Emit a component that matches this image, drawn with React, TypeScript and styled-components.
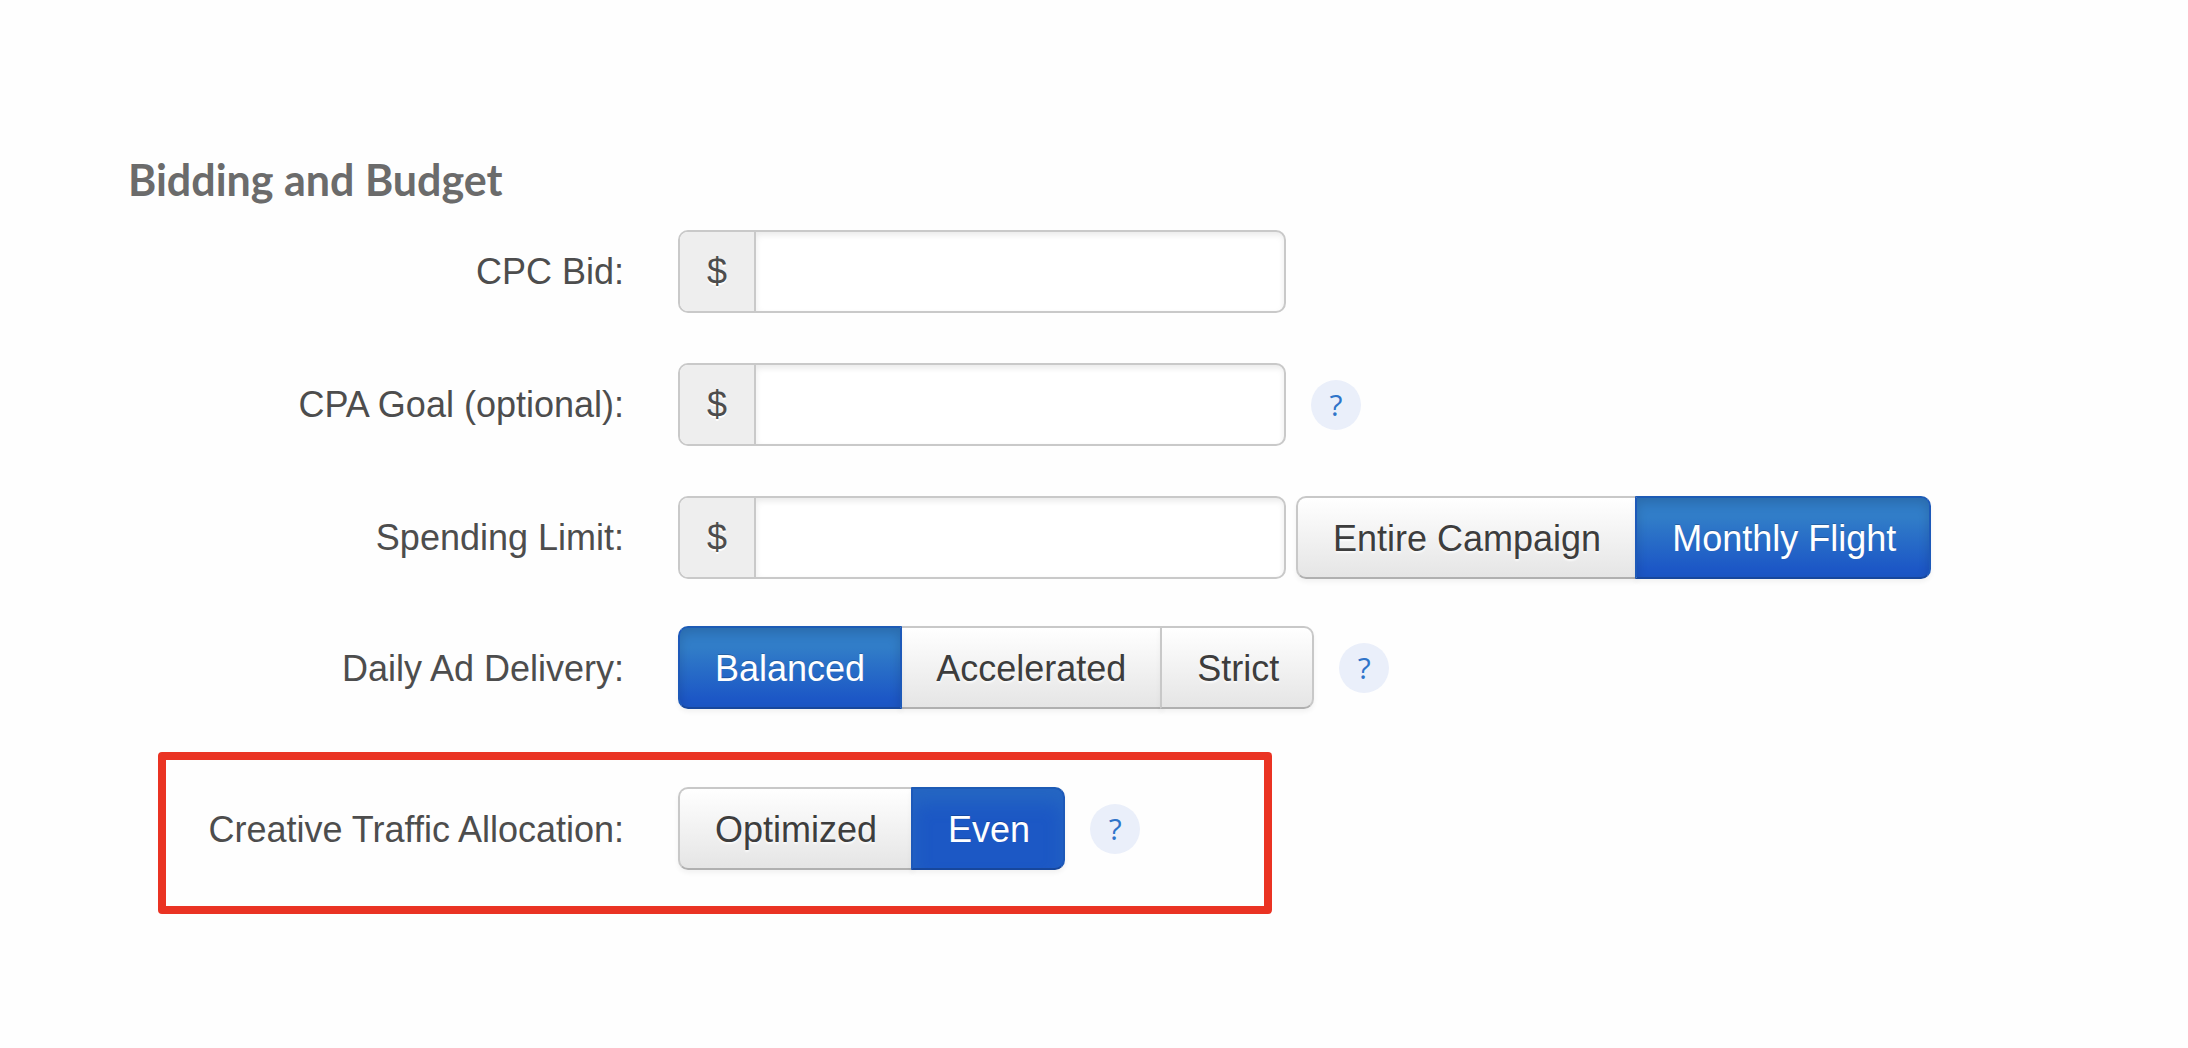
import React, { useState } from "react";
import styled, { createGlobalStyle, css } from "styled-components";

const GlobalStyle = createGlobalStyle`
  *, *::before, *::after { box-sizing: border-box; }
  body {
    margin: 0;
    background: #fefefe;
    color: #4d4d4d;
    font-family: "Liberation Sans", Arial, sans-serif;
    font-size: 36px;
    line-height: 42px;
  }
`;

const Page = styled.form`
  padding: 152px 128px 128px;
`;

const Heading = styled.h2`
  margin: 0 0 22px;
  color: #6b6b6b;
  font-family: Lato, sans-serif;
  font-size: 43px;
  font-weight: 700;
  line-height: 56px;
`;

const FieldList = styled.div`
  display: grid;
  gap: 50px;
  margin-bottom: 47px;
`;

const Row = styled.div<{ $highlighted?: boolean }>`
  display: flex;
  align-items: center;
  padding-left: 38px;

  ${({ $highlighted }) =>
    $highlighted &&
    css`
      max-width: 1114px;
      margin: 43px 0 0 30px;
      padding: 27px 0 36px;
      border: 8px solid #ea3323;
      border-radius: 4px;
    `}
`;

const labelStyle = css`
  flex: none;
  width: 458px;
  margin-right: 54px;
  text-align: right;
  white-space: nowrap;
`;

const FieldLabel = styled.label`
  ${labelStyle}
`;

const GroupLabel = styled.span`
  ${labelStyle}
  padding-top: 2px;
`;

const MoneyBox = styled.div`
  display: flex;
  flex: none;
  width: 608px;
  height: 83px;
  overflow: hidden;
  border: 2px solid #c9c9c9;
  border-radius: 10px;
  background: #fff;
`;

const Currency = styled.span`
  display: flex;
  flex: none;
  align-items: center;
  justify-content: center;
  width: 76px;
  border-right: 2px solid #c9c9c9;
  background: #eee;
  text-shadow: 0 2px 0 #fff;
`;

const MoneyInput = styled.input`
  flex: 1;
  min-width: 0;
  padding: 0 16px;
  border: 0;
  outline: 0;
  background: transparent;
  box-shadow: inset 0 3px 6px rgba(0, 0, 0, 0.09);
  color: inherit;
  font: inherit;
`;

const Segments = styled.div<{ $spaced?: boolean }>`
  display: flex;
  flex: none;
  margin-left: ${({ $spaced }) => ($spaced ? 10 : 0)}px;
`;

const Segment = styled.button<{ $selected: boolean; $deep?: boolean }>`
  height: 83px;
  padding: 2px 35px 0;
  border: 2px solid #c8c8c8;
  border-bottom-color: #b0b0b0;
  background: linear-gradient(#fff, #e5e5e5);
  box-shadow: inset 0 2px 0 rgba(255, 255, 255, 0.2), 0 3px 5px rgba(0, 0, 0, 0.05);
  color: #3d3d3d;
  font: inherit;
  text-shadow: 0 2px 2px rgba(255, 255, 255, 0.75);
  white-space: nowrap;
  cursor: pointer;

  & + & {
    margin-left: -3px;
  }

  &:first-child {
    border-radius: 10px 0 0 10px;
  }

  &:last-child {
    padding-right: 33px;
    border-radius: 0 10px 10px 0;
  }

  ${({ $selected, $deep }) =>
    $selected &&
    css`
      z-index: 1;
      border-color: #1d5bb5 #1d59b9 #17479c;
      background: ${$deep ? "#1c58c5" : "linear-gradient(#317dc8 25%, #1c57c6 90%)"};
      box-shadow: ${$deep
        ? "inset 0 14px 18px rgba(48, 120, 190, 0.45)"
        : "inset 0 5px 11px rgba(0, 0, 0, 0.14)"},
        0 3px 5px rgba(0, 0, 0, 0.05);
      color: #fff;
      text-shadow: 0 -1px 0 rgba(0, 0, 0, 0.2);
    `}
`;

const Help = styled.button`
  flex: none;
  width: 50px;
  height: 50px;
  margin-left: 25px;
  padding: 0;
  border: 0;
  border-radius: 50%;
  background: #eaeffa;
  color: #2f74c9;
  font-family: "Open Sans", sans-serif;
  font-size: 30px;
  line-height: 50px;
  cursor: pointer;
`;

type MoneyFieldProps = { id: string; describedBy: string };

function MoneyField({ id, describedBy }: MoneyFieldProps) {
  return (
    <MoneyBox>
      <Currency id={describedBy}>$</Currency>
      <MoneyInput id={id} type="text" inputMode="decimal" aria-describedby={describedBy} />
    </MoneyBox>
  );
}

type ChoiceProps = {
  labelledBy: string;
  options: string[];
  initial: string;
  spaced?: boolean;
  deep?: boolean;
};

function Choice({ labelledBy, options, initial, spaced, deep }: ChoiceProps) {
  const [value, setValue] = useState(initial);
  return (
    <Segments role="group" aria-labelledby={labelledBy} $spaced={spaced}>
      {options.map((option) => (
        <Segment
          key={option}
          type="button"
          aria-pressed={option === value}
          $selected={option === value}
          $deep={deep}
          onClick={() => setValue(option)}
        >
          {option}
        </Segment>
      ))}
    </Segments>
  );
}

export default function App() {
  return (
    <>
      <GlobalStyle />
      <Page>
        <Heading>Bidding and Budget</Heading>
        <FieldList>
          <Row>
            <FieldLabel htmlFor="cpc-bid">CPC Bid:</FieldLabel>
            <MoneyField id="cpc-bid" describedBy="cpc-currency" />
          </Row>
          <Row>
            <FieldLabel htmlFor="cpa-goal">CPA Goal (optional):</FieldLabel>
            <MoneyField id="cpa-goal" describedBy="cpa-currency" />
            <Help type="button">?</Help>
          </Row>
          <Row>
            <FieldLabel id="limit-label" htmlFor="spending-limit">
              Spending Limit:
            </FieldLabel>
            <MoneyField id="spending-limit" describedBy="limit-currency" />
            <Choice
              labelledBy="limit-label"
              options={["Entire Campaign", "Monthly Flight"]}
              initial="Monthly Flight"
              spaced
            />
          </Row>
        </FieldList>
        <Row>
          <GroupLabel id="delivery-label">Daily Ad Delivery:</GroupLabel>
          <Choice
            labelledBy="delivery-label"
            options={["Balanced", "Accelerated", "Strict"]}
            initial="Balanced"
          />
          <Help type="button">?</Help>
        </Row>
        <Row $highlighted>
          <GroupLabel id="allocation-label">Creative Traffic Allocation:</GroupLabel>
          <Choice
            labelledBy="allocation-label"
            options={["Optimized", "Even"]}
            initial="Even"
            deep
          />
          <Help type="button">?</Help>
        </Row>
      </Page>
    </>
  );
}
